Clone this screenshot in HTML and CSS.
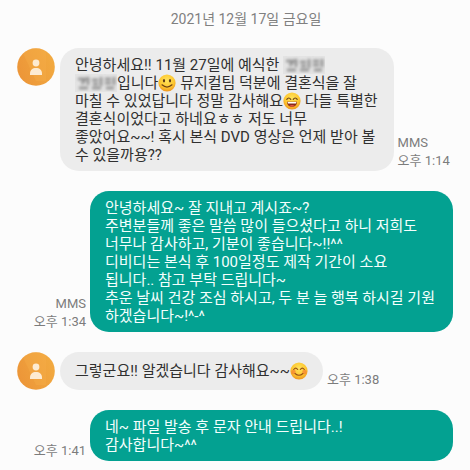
FILE: index.html
```html
<!DOCTYPE html>
<html lang="ko">
<head>
<meta charset="utf-8">
<meta name="viewport" content="width=device-width, initial-scale=1">
<title>메시지</title>
<link rel="stylesheet" href="styles.css">
</head>
<body>
<svg class="defs" aria-hidden="true">
  <defs>
    <radialGradient id="face" cx="50%" cy="35%" r="65%">
      <stop offset="0" stop-color="#ffe45c"/>
      <stop offset="0.65" stop-color="#fdc62f"/>
      <stop offset="1" stop-color="#ee9420"/>
    </radialGradient>
    <linearGradient id="disc" x1="0" y1="0.7" x2="1" y2="0.3">
      <stop offset="0" stop-color="#ec9538"/>
      <stop offset="1" stop-color="#f2aa40"/>
    </linearGradient>
    <filter id="soft" x="-10%" y="-20%" width="120%" height="140%"><feGaussianBlur stdDeviation="1.8"/></filter>
    <symbol id="avatar" viewBox="0 0 38 38">
      <circle cx="19" cy="19" r="18.8" fill="url(#disc)"/>
      <path d="M6 5.500A18.800 18.800 0 0 1 29 3V33H19Z" fill="#f6b04a" opacity="0.35"/>
      <circle cx="19" cy="15" r="3.400" fill="#fdebd2"/>
      <path d="M13 27v-1.500c0-3.500 2.500-5.500 6-5.500s6 2 6 5.500V27z" fill="#fdebd2"/>
    </symbol>
    <symbol id="smudge" viewBox="0 0 42 18">
      <rect width="42" height="18" fill="#e3e3e3"/>
      <g filter="url(#soft)" fill="none" stroke="#8a8a8a" stroke-width="2.500">
        <path d="M3 5h7l-3 5M13 3v8M4 14h9M17 6h6M18 10h5M26 3v9M17 14h9M30 5h6M30 9h6M39 3v8M31 14h8"/>
      </g>
    </symbol>
  </defs>
</svg>
<main class="thread">
  <h1 class="date">2021년 12월 17일 금요일</h1>

  <article class="row">
    <svg class="avatar" role="img" aria-label="연락처"><use href="#avatar"/></svg>
    <p class="bubble">안녕하세요!! 11월 27일에 예식한 <svg class="smudge" aria-hidden="true"><use href="#smudge"/></svg><br>
      <svg class="smudge" aria-hidden="true"><use href="#smudge"/></svg>입니다<svg class="emoji" viewBox="0 0 18 18" aria-hidden="true"><circle cx="9" cy="9" r="8.600" fill="url(#face)"/><ellipse cx="6" cy="6.800" rx="1.100" ry="1.700" fill="#5d3a18"/><ellipse cx="12" cy="6.800" rx="1.100" ry="1.700" fill="#5d3a18"/><path d="M4 10.800q5 4.600 10 0" fill="none" stroke="#704215" stroke-width="1.200" stroke-linecap="round"/></svg> 뮤지컬팀 덕분에 결혼식을 잘<br>
      마칠 수 있었답니다 정말 감사해요<svg class="emoji" viewBox="0 0 18 18" aria-hidden="true"><circle cx="9" cy="9" r="8.600" fill="url(#face)"/><path d="M3.800 7.300q2-2.600 4 0M10.200 7.300q2-2.600 4 0" fill="none" stroke="#69401a" stroke-width="1.200" stroke-linecap="round"/><path d="M4 9.800h10c0 3-2 5-5 5s-5-2-5-5z" fill="#8b2c18"/><path d="M4.500 10h9l-.6 1.500H5.100z" fill="#fff"/><path d="M6.300 13.700q2.700-1.500 5.400 0-2.700 1.800-5.400 0z" fill="#e95645"/></svg> 다들 특별한<br>
      결혼식이었다고 하네요ㅎㅎ 저도 너무<br>
      좋았어요~~! 혹시 본식 DVD 영상은 언제 받아 볼<br>
      수 있을까용??</p>
    <div class="meta"><span>MMS</span><time>오후 1:14</time></div>
  </article>

  <article class="row sent">
    <div class="meta"><span>MMS</span><time>오후 1:34</time></div>
    <p class="bubble">안녕하세요~ 잘 지내고 계시죠~?<br>
      주변분들께 좋은 말씀 많이 들으셨다고 하니 저희도<br>
      너무나 감사하고, 기분이 좋습니다~!!^^<br>
      디비디는 본식 후 100일정도 제작 기간이 소요<br>
      됩니다.. 참고 부탁 드립니다~<br>
      추운 날씨 건강 조심 하시고, 두 분 늘 행복 하시길 기원<br>
      하겠습니다~!^-^</p>
  </article>

  <article class="row">
    <svg class="avatar" role="img" aria-label="연락처"><use href="#avatar"/></svg>
    <p class="bubble single">그렇군요!! 알겠습니다 감사해요~~<svg class="emoji" viewBox="0 0 18 18" aria-hidden="true"><circle cx="9" cy="9" r="8.600" fill="url(#face)"/><circle cx="3.500" cy="10" r="2.300" fill="#f47b32" opacity="0.65"/><circle cx="14.500" cy="10" r="2.300" fill="#f47b32" opacity="0.65"/><path d="M3.700 7.500q2-2.800 4 0M10.300 7.500q2-2.800 4 0M5 11.500q4 3.600 8 0" fill="none" stroke="#995018" stroke-width="1.100" stroke-linecap="round"/></svg></p>
    <div class="meta"><time>오후 1:38</time></div>
  </article>

  <article class="row sent">
    <div class="meta"><time>오후 1:41</time></div>
    <p class="bubble">네~ 파일 발송 후 문자 안내 드립니다..!<br>
      감사합니다~^^</p>
  </article>
</main>
</body>
</html>
```
FILE: styles.css
```css
* {
  box-sizing: border-box;
}

body {
  margin: 0;
  background: #fcfcfc;
  color: #303030;
  font-family: Roboto, "Noto Sans CJK KR", sans-serif;
  font-size: 15px;
  line-height: 18px;
}

.defs {
  position: absolute;
  width: 0;
  height: 0;
}

.thread {
  display: flex;
  flex-direction: column;
  gap: 20px;
  padding: 10px 17px;
}

.date {
  margin: 0;
  padding-left: 22px;
  color: #808080;
  font-size: 14px;
  font-weight: 400;
  text-align: center;
}

.row {
  display: flex;
  align-items: flex-start;
}

.avatar {
  flex: none;
  width: 38px;
  height: 38px;
  margin-right: 5px;
}

.bubble {
  margin: 0;
  padding: 8px 16px 7px 15px;
  border-radius: 19px;
  background: #ececec;
  white-space: nowrap;
}

.single {
  padding: 10px 15px;
}

.meta {
  display: flex;
  flex-direction: column;
  align-self: flex-end;
  flex: none;
  padding: 0 4px 1px;
  color: #7c7c7c;
  font-size: 13px;
}

.sent .meta {
  width: 73px;
  align-items: flex-end;
}

.sent .bubble {
  flex: 1;
  background: #03a191;
  color: #f4fffd;
}

.emoji {
  width: 18px;
  height: 18px;
  margin: -2px 0;
  vertical-align: -2px;
}

.smudge {
  width: 42px;
  height: 18px;
  margin: -2px 0;
  vertical-align: -2px;
}
```
